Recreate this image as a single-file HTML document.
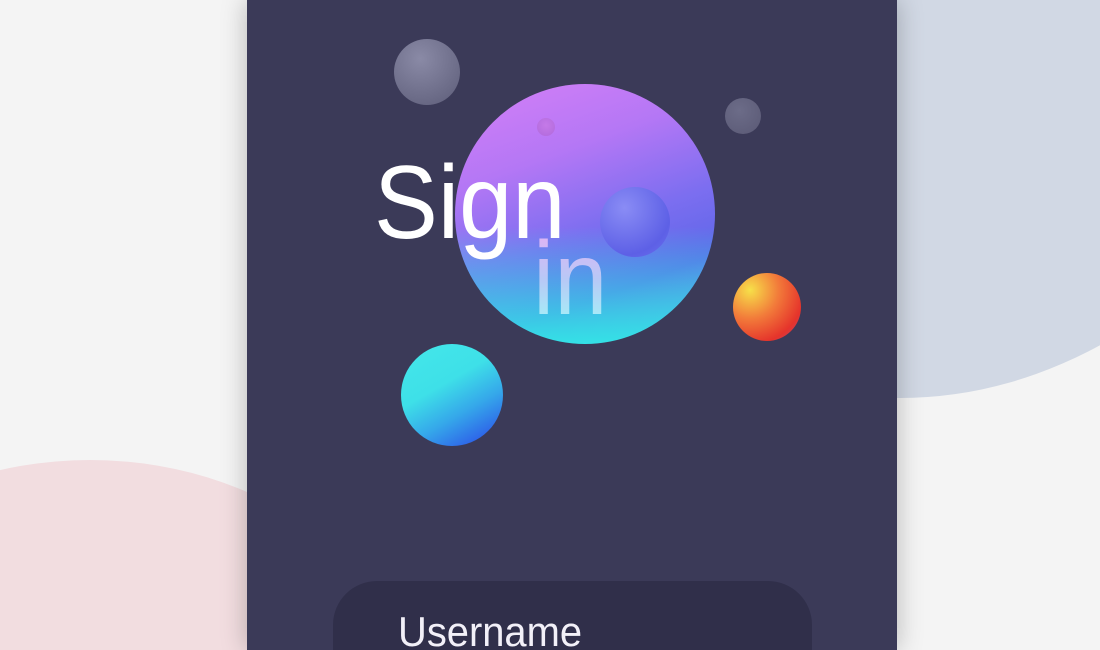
<!DOCTYPE html>
<html><head><style>
html,body{margin:0;padding:0;width:1100px;height:650px;overflow:hidden;background:#f4f4f4;font-family:"Liberation Sans",sans-serif}
.wrap{position:relative;width:1100px;height:650px;overflow:hidden}
.clip{position:absolute;overflow:hidden}
.blob1{position:absolute;left:93px;top:-1202px;width:1120px;height:1600px;border-radius:50%;background:#d1d8e4}
.blob2{position:absolute;left:-260px;top:0;width:700px;height:600px;border-radius:50%;background:#f2dde0}
.card{position:absolute;left:247px;top:0;width:650px;height:650px;background:#3b3a58;border-radius:0;box-shadow:0 0 24px rgba(0,0,0,.25)}
.s{position:absolute;border-radius:50%}
.inp{position:absolute;left:333px;top:581px;width:479px;height:69px;border-radius:44px 44px 0 0;background:#302f4a}
.t{position:absolute;white-space:nowrap;transform-origin:0 0;line-height:1}
</style></head><body><div class="wrap">
<div class="clip" style="left:247px;top:0;width:853px;height:400px"><div class="blob1"></div></div>
<div class="clip" style="left:0;top:460px;width:260px;height:190px"><div class="blob2"></div></div>
<div class="card"></div>
<div class="s" style="left:394px;top:39px;width:66px;height:66px;background:radial-gradient(circle at 40% 30%,#8a8aa6,#6a6a86 70%,#5c5b78)"></div>
<div class="s" style="left:725px;top:98px;width:36px;height:36px;background:radial-gradient(circle at 40% 35%,#6c6c88,#5a5975)"></div>
<div class="s" style="left:455px;top:84px;width:260px;height:260px;background:linear-gradient(180deg,rgba(0,0,0,0) 55%,rgba(50,230,230,.95) 100%),linear-gradient(160deg,#d680f7 0%,#b477f5 30%,#7c6ef0 55%,#5d66e8 75%,#5b8fe6 90%)"></div>
<div class="s" style="left:537px;top:118px;width:18px;height:18px;background:radial-gradient(circle at 50% 40%,#c57ae8,#b069dc)"></div>
<div class="s" style="left:600px;top:187px;width:70px;height:70px;background:radial-gradient(circle at 35% 30%,#8a8cf5,#5d60e6 70%,#6c72ee)"></div>
<div class="s" style="left:733px;top:273px;width:68px;height:68px;background:radial-gradient(circle at 25% 25%,#f7e049,#f27a3a 40%,#e5332b 75%,#b4487d)"></div>
<div class="s" style="left:401px;top:344px;width:102px;height:102px;background:linear-gradient(150deg,#44e7ea 0%,#3ee0e8 40%,#35a7ea 65%,#2a3fe8 100%)"></div>
<div class="t" style="left:374px;top:151px;font-size:104px;color:#fff;transform:scaleX(0.92)">Sign</div>
<div class="t" style="left:533px;top:227px;font-size:104px;transform:scaleX(0.92);background:linear-gradient(180deg,#e6b0f5,#b8c8f6 50%,#a0f8f8);-webkit-background-clip:text;color:transparent">in</div>
<div class="inp"></div>
<div class="t" style="left:398px;top:611px;height:39px;overflow:hidden;font-size:42px;color:#f2f0f8;transform:scaleX(0.95)">Username</div>
</div></body></html>
